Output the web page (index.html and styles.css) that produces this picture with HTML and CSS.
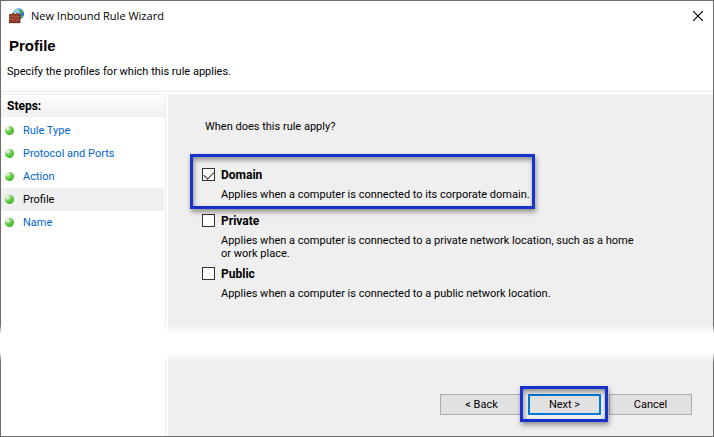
FILE: index.html
```html
<!DOCTYPE html>
<html lang="en">
<head>
<meta charset="utf-8">
<title>New Inbound Rule Wizard</title>
<link rel="stylesheet" href="styles.css">
</head>
<body>
<div class="window">
  <header class="titlebar">
    <svg class="app-icon" viewBox="0 0 16 16" aria-hidden="true">
      <defs>
        <radialGradient id="sea" cx="0.35" cy="0.3" r="0.8">
          <stop offset="0" stop-color="#c4eafc"/>
          <stop offset="0.5" stop-color="#2f83e2"/>
          <stop offset="1" stop-color="#1746a8"/>
        </radialGradient>
      </defs>
      <circle cx="9.500" cy="5.800" r="5.500" fill="url(#sea)"/>
      <path d="M5 4Q6 1 9 .5L10 2 8 3.500 7 6H5z" fill="#8fd6c8"/>
      <path d="M11 1.500L14 3.500 13.500 6 11.500 5 10.500 3zM12 7.500h2.500L13 10h-2z" fill="#4cae3c"/>
      <path d="M0 6h3V5h2v1h2V5h2v1h2v9H0z" fill="#8f3826"/>
      <path d="M0 8.500h11M0 11.500h11M3.500 6v2.500M7.500 6v2.500M1.500 8.500v3M5.500 8.500v3M9.500 8.500v3M3.500 11.500V15M7.500 11.500V15" stroke="#bb6a54" stroke-width=".5"/>
      <path d="M0 14.700h11V6" stroke="#602417" stroke-width=".7" fill="none"/>
    </svg>
    <span class="window-title">New Inbound Rule Wizard</span>
    <button class="close" type="button" aria-label="Close">
      <svg viewBox="0 0 10 10" aria-hidden="true"><path d="M0 0L10 10M10 0L0 10"/></svg>
    </button>
  </header>
  <div class="heading">
    <h1>Profile</h1>
    <p>Specify the profiles for which this rule applies.</p>
  </div>
  <div class="body">
    <nav class="steps" aria-labelledby="steps-title">
      <h2 id="steps-title">Steps:</h2>
      <ul>
        <li><span class="dot"></span><a href="#">Rule Type</a></li>
        <li><span class="dot"></span><a href="#">Protocol and Ports</a></li>
        <li><span class="dot"></span><a href="#">Action</a></li>
        <li class="current"><span class="dot"></span><a href="#" aria-current="step">Profile</a></li>
        <li><span class="dot"></span><a href="#">Name</a></li>
      </ul>
    </nav>
    <main class="content">
      <p class="question">When does this rule apply?</p>
      <div class="options">
        <div class="option highlight highlight-option">
          <input type="checkbox" id="domain" checked>
          <label for="domain">Domain</label>
          <p>Applies when a computer is connected to its corporate domain.</p>
        </div>
        <div class="option">
          <input type="checkbox" id="private">
          <label for="private">Private</label>
          <p>Applies when a computer is connected to a private network location, such as a home or work place.</p>
        </div>
        <div class="option">
          <input type="checkbox" id="public">
          <label for="public">Public</label>
          <p>Applies when a computer is connected to a public network location.</p>
        </div>
      </div>
      <div class="actions">
        <button class="back" type="button">&lt; Back</button>
        <div class="highlight highlight-button"><button class="next" type="button">Next &gt;</button></div>
        <button class="cancel" type="button">Cancel</button>
      </div>
    </main>
  </div>
</div>
<div class="cut" aria-hidden="true"></div>
</body>
</html>
```

FILE: styles.css
```css
* {
  box-sizing: border-box;
}

body {
  position: relative;
  margin: 0;
  font: 11px/13px Roboto, "Liberation Sans", sans-serif;
  color: #000;
}

h1, h2, p, ul {
  margin: 0;
  padding: 0;
}

button {
  font: inherit;
  color: inherit;
  padding: 0;
}

.window {
  display: flex;
  flex-direction: column;
  min-height: 100vh;
  border: 1px solid #6d6d6d;
  background: #fff;
}

.titlebar {
  display: flex;
  align-items: center;
  height: 29px;
  padding: 0 10px 0 8px;
}

.app-icon {
  width: 16px;
  height: 16px;
  margin-right: 6px;
}

.window-title {
  flex: 1;
  font: 11px/16px "Open Sans", "Noto Sans", sans-serif;
}

.close {
  display: flex;
  border: 0;
  background: none;
}

.close svg {
  width: 10px;
  height: 10px;
  stroke: #000;
  stroke-width: 1.2;
}

.heading {
  height: 62px;
  padding: 6px 6px 0;
  border-bottom: 1px solid #ececec;
}

.heading h1 {
  padding-left: 2px;
  margin-bottom: 9px;
  font: bold 15px/20px "Liberation Sans", sans-serif;
}

.body {
  display: flex;
  flex: 1;
  margin-top: 2px;
}

.steps {
  flex: none;
  width: 165px;
  margin-right: 2px;
  border-right: 1px solid #ececec;
  border-top: 1px solid #ececec;
}

.steps h2 {
  height: 22px;
  margin-bottom: 2px;
  padding-left: 6px;
  font: bold 12px/22px Roboto, sans-serif;
  background: linear-gradient(#fff, #efefef);
}

.steps ul {
  list-style: none;
}

.steps li {
  display: flex;
  align-items: center;
  height: 23px;
  margin-right: 1px;
  padding-left: 4px;
}

.steps a {
  margin-left: 9px;
  color: #0066cc;
  text-decoration: none;
}

.steps .current {
  background: #efefef;
}

.steps .current a {
  color: #000;
}

.dot {
  width: 9px;
  height: 9px;
  border-radius: 50%;
  background: radial-gradient(circle at 30% 25%, #e4f5dc 0 10%, #7ccb63 35%, #4cc431 60%, #37a022);
}

.content {
  display: flex;
  flex: 1;
  flex-direction: column;
  padding: 26px 21px 21px 34px;
  background: #efefef;
}

.question {
  padding-left: 3px;
  margin-bottom: 35px;
}

.options {
  max-width: 440px;
}

.option {
  display: grid;
  grid-template-columns: 13px 1fr;
  grid-auto-rows: max-content;
  gap: 7px 6px;
  min-height: 46px;
  padding-bottom: 7px;
}

.option input {
  appearance: none;
  width: 13px;
  height: 13px;
  margin: 0;
  border: 1px solid #333;
  background: #fff;
}

.option input:checked::before {
  content: "";
  display: block;
  width: 9px;
  height: 5px;
  margin: 2px 1px;
  border: solid #333;
  border-width: 0 0 1px 1px;
  transform: rotate(-45deg);
}

.option label {
  font: bold 12px/14px Roboto, sans-serif;
}

.option p {
  grid-column: 2;
  margin-top: -1px;
}

.highlight {
  position: relative;
}

.highlight::after {
  content: "";
  position: absolute;
  border: 3px solid #1832cc;
  box-shadow: 1px 3px 5px rgba(0, 0, 0, .4), inset 1px 3px 5px rgba(0, 0, 0, .4);
  pointer-events: none;
}

.highlight-option::after {
  inset: -14px 107px 5px -12px;
}

.highlight-button::after {
  inset: -8px -7px -7px -8px;
}

.actions {
  display: flex;
  margin-top: auto;
}

.actions button {
  width: 83px;
  height: 21px;
  border: 1px solid #adadad;
  background: #e1e1e1;
}

.actions .back {
  margin-left: auto;
}

.highlight-button {
  margin: 0 8px 0 5px;
}

.actions .next {
  display: block;
  width: 73px;
  border: 2px solid #0078d7;
}

.cut {
  position: absolute;
  right: 0;
  bottom: 75px;
  left: 0;
  height: 37px;
  background: linear-gradient(transparent, #fff 9px, #fff 27px, transparent);
}
```
